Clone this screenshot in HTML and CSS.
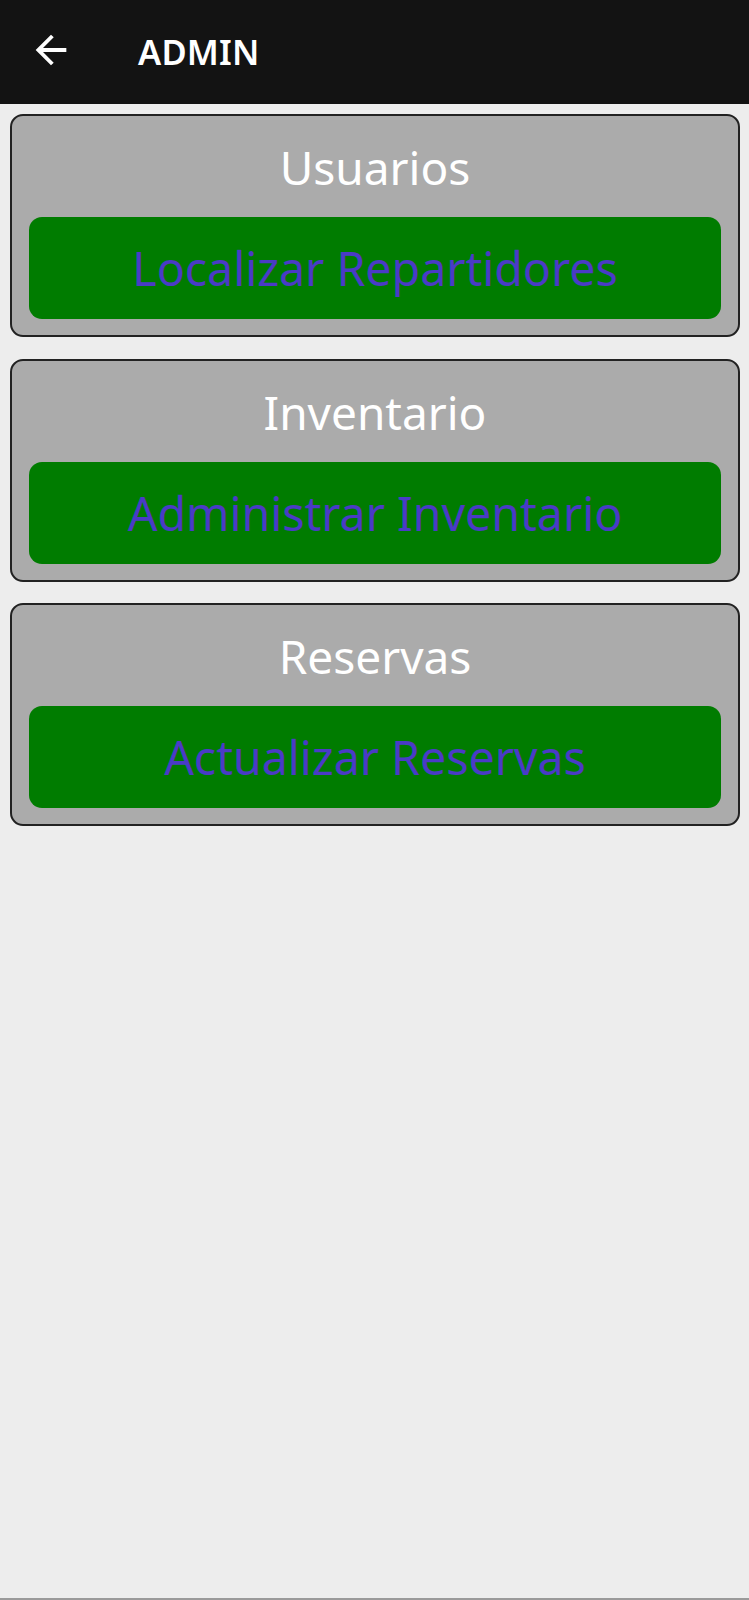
FILE: index.html
```html
<!DOCTYPE html>
<html lang="es">
<head>
<meta charset="utf-8">
<title>ADMIN</title>
<link rel="stylesheet" href="styles.css">
</head>
<body>
<header class="appbar">
  <svg class="back" viewBox="0 0 24 24" aria-hidden="true"><path d="M20 11H7.83l5.59-5.59L12 4l-8 8 8 8 1.41-1.41L7.83 13H20v-2z"/></svg>
  <h1 class="appbar-title">ADMIN</h1>
</header>
<main class="content">
  <section class="card">
    <h2 class="card-title">Usuarios</h2>
    <button class="action">Localizar Repartidores</button>
  </section>
  <section class="card">
    <h2 class="card-title">Inventario</h2>
    <button class="action">Administrar Inventario</button>
  </section>
  <section class="card">
    <h2 class="card-title">Reservas</h2>
    <button class="action">Actualizar Reservas</button>
  </section>
</main>
<div class="navline"></div>
</body>
</html>
```

FILE: styles.css
```css
html, body {
  margin: 0;
  padding: 0;
}
body {
  min-height: 1600px;
  display: flex;
  flex-direction: column;
  background: #ededed;
  font-family: "Noto Sans", "Open Sans", sans-serif;
}
.appbar {
  height: 104px;
  background: #131313;
  display: flex;
  align-items: center;
  flex-shrink: 0;
}
.back {
  width: 46px;
  height: 46px;
  margin-left: 28px;
  margin-top: -5px;
  fill: #ffffff;
}
.appbar-title {
  margin: 0 0 0 64px;
  color: #ffffff;
  font-size: 34.5px;
  font-weight: 600;
  line-height: 1;
  letter-spacing: 0.2px;
}
.content {
  flex: 1;
  padding: 10px 9px 0 10px;
  display: flex;
  flex-direction: column;
  gap: 21.5px;
}
.card {
  background: #ababab;
  border: 2px solid #222222;
  border-radius: 13px;
  padding: 19px 17px 16px 17px;
  display: flex;
  flex-direction: column;
}
.card-title {
  margin: 0 0 18px 0;
  text-align: center;
  color: #ffffff;
  font-size: 46px;
  font-weight: 400;
  line-height: 64px;
}
.action {
  height: 102px;
  border: none;
  border-radius: 13px;
  background: #007c00;
  color: #4a3bc6;
  font-family: "Noto Sans", "Open Sans", sans-serif;
  font-size: 46.5px;
  font-weight: 400;
  padding: 0;
  display: flex;
  align-items: center;
  justify-content: center;
}
.navline {
  height: 2px;
  background: #9a9a9a;
  flex-shrink: 0;
}
```
